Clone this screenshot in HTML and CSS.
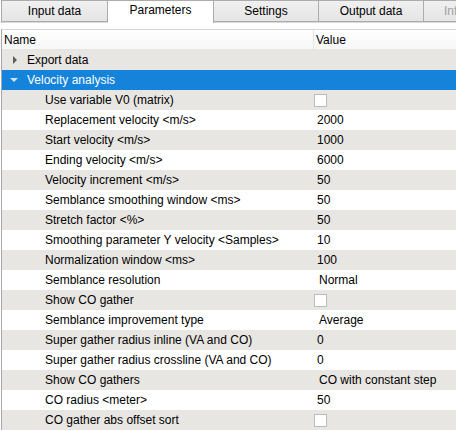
FILE: index.html
```html
<!DOCTYPE html>
<html lang="en">
<head>
  <meta charset="UTF-8">
  <title>Parameters</title>
  <link rel="stylesheet" href="styles.css">
</head>
<body>

<div class="tabs">
  <div class="tab">Input data</div>
  <div class="tab selected">Parameters</div>
  <div class="tab">Settings</div>
  <div class="tab">Output data</div>
  <div class="tab disabled">Info</div>
</div>

<div class="pane">
  <div class="tree">
    <div class="header">
      <div class="col-name">Name</div>
      <div class="col-value">Value</div>
    </div>

    <div class="row alt">
      <div class="name top">
        <svg class="arrow" width="20" height="20"><polygon points="9,6 13,10 9,14" fill="#5c5c5c"/></svg>
        Export data
      </div>
      <div class="value"></div>
    </div>
    <div class="row current">
      <div class="name top">
        <svg class="arrow" width="20" height="20"><polygon points="6,8 14,8 10,12" fill="#cfe2f6"/></svg>
        Velocity analysis
      </div>
      <div class="value"></div>
    </div>

    <div class="row alt">
      <div class="name child">Use variable V0 (matrix)</div>
      <div class="value check"><span class="box"></span></div>
    </div>
    <div class="row">
      <div class="name child">Replacement velocity &lt;m/s&gt;</div>
      <div class="value">2000</div>
    </div>
    <div class="row alt">
      <div class="name child">Start velocity &lt;m/s&gt;</div>
      <div class="value">1000</div>
    </div>
    <div class="row">
      <div class="name child">Ending velocity &lt;m/s&gt;</div>
      <div class="value">6000</div>
    </div>
    <div class="row alt">
      <div class="name child">Velocity increment &lt;m/s&gt;</div>
      <div class="value">50</div>
    </div>
    <div class="row">
      <div class="name child">Semblance smoothing window &lt;ms&gt;</div>
      <div class="value">50</div>
    </div>
    <div class="row alt">
      <div class="name child">Stretch factor &lt;%&gt;</div>
      <div class="value">50</div>
    </div>
    <div class="row">
      <div class="name child">Smoothing parameter Y velocity &lt;Samples&gt;</div>
      <div class="value">10</div>
    </div>
    <div class="row alt">
      <div class="name child">Normalization window &lt;ms&gt;</div>
      <div class="value">100</div>
    </div>
    <div class="row">
      <div class="name child">Semblance resolution</div>
      <div class="value combo">Normal</div>
    </div>
    <div class="row alt">
      <div class="name child">Show CO gather</div>
      <div class="value check"><span class="box"></span></div>
    </div>
    <div class="row">
      <div class="name child">Semblance improvement type</div>
      <div class="value combo">Average</div>
    </div>
    <div class="row alt">
      <div class="name child">Super gather radius inline (VA and CO)</div>
      <div class="value">0</div>
    </div>
    <div class="row">
      <div class="name child">Super gather radius crossline (VA and CO)</div>
      <div class="value">0</div>
    </div>
    <div class="row alt">
      <div class="name child">Show CO gathers</div>
      <div class="value combo">CO with constant step</div>
    </div>
    <div class="row">
      <div class="name child">CO radius &lt;meter&gt;</div>
      <div class="value">50</div>
    </div>
    <div class="row alt">
      <div class="name child">CO gather abs offset sort</div>
      <div class="value check"><span class="box"></span></div>
    </div>
  </div>
</div>

</body>
</html>
```

FILE: styles.css
```css
body {
  font-family: "Liberation Sans", Arial, sans-serif;
  font-size: 12px;
  color: #000;
  background-color: #fff;
  margin: 0;
  padding: 0;
  overflow: hidden;
}

.tabs {
  display: flex;
  height: 22px;
  padding-left: 1px;
  border-bottom: 1px solid #d9d9d9;
  white-space: nowrap;
}
.tab {
  flex: 0 0 105px;
  box-sizing: border-box;
  height: 22px;
  border: 1px solid #acacac;
  border-left: none;
  background: linear-gradient(#f0f0f0, #e5e5e5);
  text-align: center;
  line-height: 21px;
}
.tab:first-child {
  border-left: 1px solid #acacac;
  flex-basis: 107px;
}
.tab.selected {
  flex-basis: 106px;
  height: 23px;
  background: #fff;
  border-bottom: none;
  line-height: 19px;
  position: relative;
  z-index: 1;
}
.tab.disabled {
  color: #a0a0a0;
  text-align: left;
  padding-left: 20px;
}

.pane {
  padding: 6px 0 0 1px;
}
.tree {
  border-left: 1px solid #a8a8a8;
  border-top: 1px solid #d4d4d4;
}

.header {
  display: flex;
  height: 19px;
  line-height: 20px;
  border-bottom: 1px solid #e5e5e5;
  background: linear-gradient(#ffffff, #f7f7f7);
}
.header .col-name {
  width: 309px;
  padding-left: 2px;
  border-right: 1px solid #e5e5e5;
}
.header .col-value {
  padding-left: 2px;
}

.row {
  display: flex;
  height: 20px;
  line-height: 21px;
  background-color: #fff;
  white-space: nowrap;
}
.row.alt {
  background-color: #e8e6e3;
}
.row.current {
  background-color: #1583da;
  color: #fff;
}
.name {
  width: 311px;
  overflow: hidden;
  display: flex;
  align-items: center;
}
.name.top {
  padding-left: 2px;
  width: 309px;
}
.name.top .arrow {
  flex: none;
  margin-right: 3px;
}
.name.child {
  padding-left: 43px;
  width: 268px;
}
.value {
  padding-left: 4px;
}
.value.combo {
  padding-left: 6px;
}
.value.check {
  padding-left: 1px;
  display: flex;
  align-items: center;
}
.box {
  width: 11px;
  height: 11px;
  border: 1px solid #bcbcbc;
  background: #fff;
}
```
